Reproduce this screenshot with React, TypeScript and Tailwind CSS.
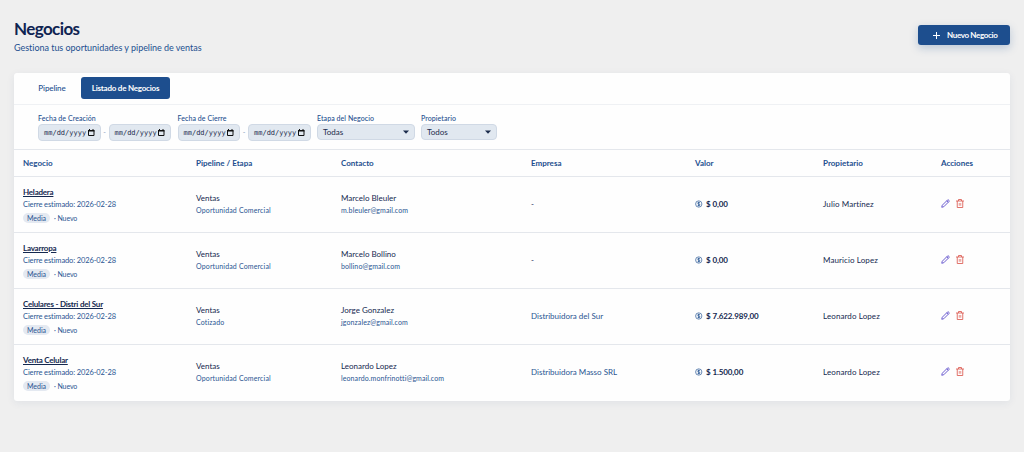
import React from "react";

interface Deal {
  name: string;
  closeDate: string;
  stage: string;
  contact: string;
  email: string;
  company?: string;
  value: string;
  owner: string;
}

const deals: Deal[] = [
  {
    name: "Heladera",
    closeDate: "2026-02-28",
    stage: "Oportunidad Comercial",
    contact: "Marcelo Bleuler",
    email: "m.bleuler@gmail.com",
    value: "$ 0,00",
    owner: "Julio Martínez",
  },
  {
    name: "Lavarropa",
    closeDate: "2026-02-28",
    stage: "Oportunidad Comercial",
    contact: "Marcelo Bollino",
    email: "bollino@gmail.com",
    value: "$ 0,00",
    owner: "Mauricio Lopez",
  },
  {
    name: "Celulares - Distri del Sur",
    closeDate: "2026-02-28",
    stage: "Cotizado",
    contact: "Jorge Gonzalez",
    email: "jgonzalez@gmail.com",
    company: "Distribuidora del Sur",
    value: "$ 7.622.989,00",
    owner: "Leonardo Lopez",
  },
  {
    name: "Venta Celular",
    closeDate: "2026-02-28",
    stage: "Oportunidad Comercial",
    contact: "Leonardo Lopez",
    email: "leonardo.monfrinotti@gmail.com",
    company: "Distribuidora Masso SRL",
    value: "$ 1.500,00",
    owner: "Leonardo Lopez",
  },
];

const columns = [
  { label: "Negocio", width: "w-[173px]" },
  { label: "Pipeline / Etapa", width: "w-[145px]" },
  { label: "Contacto", width: "w-[190px]" },
  { label: "Empresa", width: "w-[164px]" },
  { label: "Valor", width: "w-[128px]" },
  { label: "Propietario", width: "w-[118px]" },
  { label: "Acciones", width: "w-[78px]" },
];

const CoinIcon = () => (
  <svg width="8" height="8" viewBox="0 0 16 16" fill="none" stroke="#1d4f8f" className="shrink-0">
    <circle cx="7.500" cy="8" r="6.300" strokeWidth="1.300" />
    <path
      d="M9.800 6C9.500 5.200 8.700 4.800 7.500 4.800c-1.400 0-2.300.6-2.300 1.500 0 2.300 4.700 1.100 4.700 3.400 0 1-1 1.600-2.400 1.600-1.300 0-2.200-.5-2.500-1.400M7.500 3.500v9"
      strokeWidth="1.500"
    />
  </svg>
);

const PencilIcon = () => (
  <svg width="9" height="9" viewBox="0 0 18 18" fill="none" stroke="#5b4bc9" strokeWidth="1.800" strokeLinejoin="round">
    <path d="M1.500 16.500l1-4L13 2a1.500 1.500 0 0 1 2.100 0l.9.900a1.500 1.500 0 0 1 0 2.100L5.500 15.500z" />
    <path d="M11.500 3.700L14.300 6.500" />
  </svg>
);

const TrashIcon = () => (
  <svg width="8" height="9" viewBox="0 0 16 18" fill="none" stroke="#dc5a50" strokeWidth="1.700">
    <path d="M0 4h16M5 4V1h6v3M2.500 4v13h11V4" />
    <path d="M6.500 8v5.500M9.500 8v5.500" strokeWidth="1.300" />
  </svg>
);

const DateField = () => (
  <div className="flex h-[17px] w-[62.5px] items-center justify-between rounded-[4px] border border-[#d0d9e5] bg-[#e1e8f0] pr-[5px] pl-[5px]">
    <span className="pt-[1px] font-['DejaVu_Sans_Mono',monospace] text-[7px] leading-[10px] text-[#1b2b4b]">
      mm/dd/yyyy
    </span>
    <svg width="7" height="8" viewBox="0 0 7 8" className="shrink-0">
      <path d="M0.500 1.500h5.500v5h-5.500z" fill="none" stroke="#111" />
      <path d="M0 1h6.500v1.500H0zM1 0h1v1H1zM4.500 0h1v1h-1z" fill="#111" />
    </svg>
  </div>
);

const FilterLabel = ({ children }: { children: React.ReactNode }) => (
  <div className="mb-[1px] h-[10px] text-[7px] leading-[10px] font-medium tracking-[0.07px] whitespace-nowrap text-[#1d4f8f]">
    {children}
  </div>
);

const DateRange = ({ label }: { label: string }) => (
  <div>
    <FilterLabel>{label}</FilterLabel>
    <div className="flex items-center">
      <DateField />
      <span className="w-[8px] text-center text-[7px] leading-none text-[#8ba0bd]">-</span>
      <DateField />
    </div>
  </div>
);

const SelectField = ({ label, value, width }: { label: string; value: string; width: string }) => (
  <div className={width}>
    <FilterLabel>{label}</FilterLabel>
    <div className="mt-[1px] flex h-[16px] items-center justify-between rounded-[4px] border border-[#d0d9e5] bg-[#e1e8f0] pr-[5px] pl-[5px]">
      <span className="text-[8px] leading-none text-[#1b2b4b]">{value}</span>
      <svg width="6" height="4" viewBox="0 0 6 4">
        <path d="M0 0.500h6L3 3.700z" fill="#1b2b4b" />
      </svg>
    </div>
  </div>
);

const DealRow = ({ deal }: { deal: Deal }) => (
  <tr className="h-[56px] border-t border-[#e4e7ec] text-[8px] leading-[12px] text-[#14284f]">
    <td className="px-[9px] pb-[1px]">
      <div className="h-[12px] font-bold tracking-[-0.22px] underline underline-offset-1">{deal.name}</div>
      <div className="h-[13px] text-[7.5px] leading-[13px] tracking-[-0.12px] text-[#2a5592]">
        Cierre estimado: {deal.closeDate}
      </div>
      <div className="mt-[2px] flex h-[10px] items-center text-[7px] leading-[10px] text-[#2a5592]">
        <span className="mr-[4px] w-[27px] rounded-full bg-[#e4e9f1] text-center">Media</span>
        <span className="tracking-[-0.1px]">· Nuevo</span>
      </div>
    </td>
    <td className="px-[9px]">
      <div>Ventas</div>
      <div className="text-[7px] leading-[13px] tracking-[0.15px] text-[#2a5592]">{deal.stage}</div>
    </td>
    <td className="px-[9px]">
      <div>{deal.contact}</div>
      <div className="text-[7px] leading-[13px] tracking-[0.1px] text-[#2a5592]">{deal.email}</div>
    </td>
    <td className="px-[9px] pb-[1px]">
      {deal.company ? <span className="text-[#2a5592]">{deal.company}</span> : <span>-</span>}
    </td>
    <td className="px-[9px] pb-[1px]">
      <div className="flex items-center gap-[3px] font-bold tracking-[-0.1px]">
        <CoinIcon />
        <span>{deal.value}</span>
      </div>
    </td>
    <td className="px-[9px] pb-[1px] tracking-[0.1px]">{deal.owner}</td>
    <td className="px-[9px] pb-[2px]">
      <div className="flex items-center gap-[6px]">
        <PencilIcon />
        <TrashIcon />
      </div>
    </td>
  </tr>
);

const App = () => {
  return (
    <div className="h-[452px] overflow-hidden bg-[#efefef] px-[14px] pt-[18px] font-[Lato,sans-serif]">
      {/* Page heading */}
      <header className="flex h-[55px] items-start justify-between">
        <div>
          <h1 className="h-[22px] text-[17px] leading-[22px] font-bold tracking-[-0.6px] text-[#0f2452]">Negocios</h1>
          <p className="text-[9px] leading-[15px] tracking-[-0.03px] text-[#1d4f8f]">
            Gestiona tus oportunidades y pipeline de ventas
          </p>
        </div>
        <button className="mt-[7px] flex h-[20px] w-[92px] items-center rounded-[3px] bg-[#1d4e8e] pl-[15px] text-[8px] font-bold tracking-[-0.35px] whitespace-nowrap text-white shadow-[0_3px_8px_rgba(29,78,142,0.25)]">
          <svg width="7" height="7" viewBox="0 0 7 7" className="mr-[7px]">
            <path d="M3.500 0v7M0 3.500h7" stroke="#fff" />
          </svg>
          Nuevo Negocio
        </button>
      </header>

      <main className="rounded-[3px] bg-[#fefefe] shadow-[0_2px_8px_rgba(30,60,110,0.07)]">
        {/* Tabs */}
        <nav className="flex h-[32px] items-center gap-[4px] border-b border-[#eff1f4] pb-[1px] pl-[13px] text-[8px]">
          <button className="h-[22px] w-[50px] font-medium tracking-[-0.1px] text-[#1d4f8f]">Pipeline</button>
          <button className="h-[22px] w-[89px] rounded-[3px] bg-[#1d4e8e] font-bold tracking-[-0.22px] whitespace-nowrap text-white">
            Listado de Negocios
          </button>
        </nav>

        {/* Filters */}
        <section className="flex h-[44px] gap-[6.500px] pt-[8px] pl-[24px]">
          <DateRange label="Fecha de Creación" />
          <DateRange label="Fecha de Cierre" />
          <SelectField label="Etapa del Negocio" value="Todas" width="w-[97.5px]" />
          <SelectField label="Propietario" value="Todos" width="w-[75.5px]" />
        </section>

        <table className="w-full table-fixed border-collapse">
          <thead>
            <tr className="h-[27px] border-t border-[#e4e7ec] text-left text-[8px] text-[#1d4f8f]">
              {columns.map((column) => (
                <th key={column.label} className={`${column.width} px-[9px] font-bold`}>
                  {column.label}
                </th>
              ))}
            </tr>
          </thead>
          <tbody>
            {deals.map((deal) => (
              <DealRow key={deal.name} deal={deal} />
            ))}
          </tbody>
        </table>
      </main>
    </div>
  );
};

export default App;
